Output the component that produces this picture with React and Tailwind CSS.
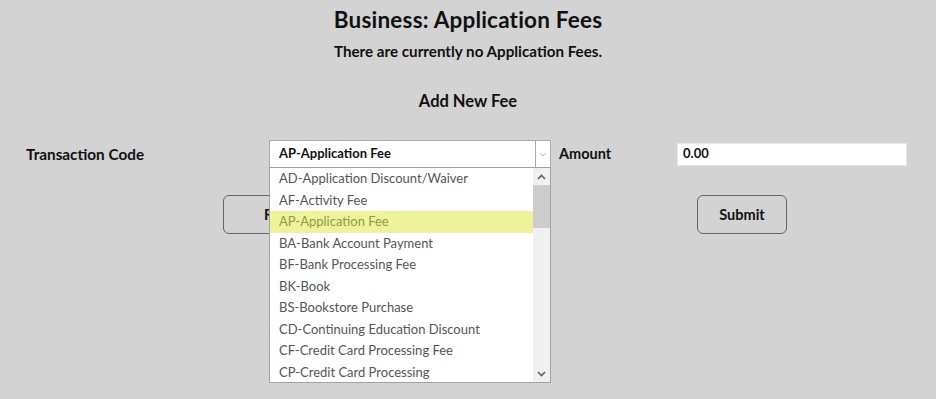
import React from "react";

const items = [
  "AD-Application Discount/Waiver",
  "AF-Activity Fee",
  "AP-Application Fee",
  "BA-Bank Account Payment",
  "BF-Bank Processing Fee",
  "BK-Book",
  "BS-Bookstore Purchase",
  "CD-Continuing Education Discount",
  "CF-Credit Card Processing Fee",
  "CP-Credit Card Processing",
];

export default function App() {
  return (
    <div className="min-h-[399px] w-[936px] bg-[#d3d3d3] font-['Lato',sans-serif] text-[#111]">
      <h1 className="pt-[6px] text-center text-[22.5px] font-bold leading-[28px] tracking-[0.2px]">
        Business: Application Fees
      </h1>
      <p className="mt-[7px] text-center text-[15.2px] font-bold leading-[20px]">
        There are currently no Application Fees.
      </p>
      <h2 className="mt-[30px] text-center text-[16.5px] font-bold leading-[20px]">Add New Fee</h2>

      <div className="mt-[29px] flex items-center">
        <div className="w-[269px] pl-[26px] text-[15.3px] font-bold">Transaction Code</div>
        <div className="relative">
          <div className="flex h-[28px] w-[282px] items-center border border-[#a9a9a9] bg-white">
            <span className="flex-1 pl-[9px] text-[13px] font-bold">AP-Application Fee</span>
            <span className="flex h-full w-[15px] items-center justify-center border-l border-[#a9a9a9]">
              <svg width="8" height="5" viewBox="0 0 8 5">
                <path d="M1 1l3 3 3-3" fill="none" stroke="#bbb" strokeWidth="1" />
              </svg>
            </span>
          </div>
          <div className="absolute left-0 top-[27px] z-10 flex h-[216px] w-[282px] border border-[#a0a0a0] bg-white">
            <ul className="flex-1">
              {items.map((it) => (
                <li
                  key={it}
                  className={
                    "h-[21.5px] pl-[9px] text-[13px] leading-[21.5px] " +
                    (it === "AP-Application Fee" ? "bg-[#eef39a] text-[#8e9a48]" : "text-[#555]")
                  }
                >
                  {it}
                </li>
              ))}
            </ul>
            <div className="flex w-[17px] flex-col bg-[#f0f0f0]">
              <div className="flex h-[17px] items-center justify-center">
                <svg width="9" height="6" viewBox="0 0 9 6">
                  <path d="M1 5l3.5-3.5L8 5" fill="none" stroke="#606060" strokeWidth="1.6" />
                </svg>
              </div>
              <div className="h-[43px] bg-[#cdcdcd]" />
              <div className="flex-1" />
              <div className="flex h-[17px] items-center justify-center">
                <svg width="9" height="6" viewBox="0 0 9 6">
                  <path d="M1 1l3.5 3.5L8 1" fill="none" stroke="#606060" strokeWidth="1.6" />
                </svg>
              </div>
            </div>
          </div>
        </div>
        <div className="ml-[8px] w-[118px] text-[14.5px] font-bold">Amount</div>
        <div className="flex h-[23px] w-[230px] items-center border border-[#e6e6e6] bg-white pl-[5px] text-[13px] font-bold">
          0.00
        </div>
      </div>

      <div className="mt-[27px] flex">
        <button className="ml-[223px] h-[39px] w-[118px] rounded-[6px] border border-[#666] text-[14.5px] font-bold">
          Reset
        </button>
        <button className="ml-[356px] h-[39px] w-[90px] rounded-[6px] border border-[#666] text-[14.5px] font-bold">
          Submit
        </button>
      </div>
    </div>
  );
}
